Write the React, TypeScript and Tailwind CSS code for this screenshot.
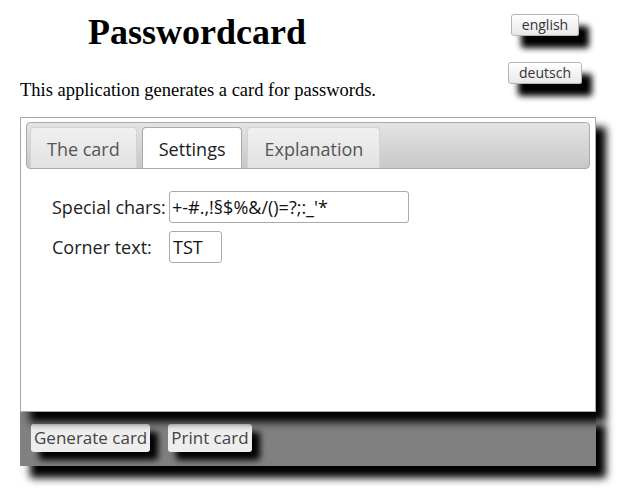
import React from "react";

const sans = "font-['Open_Sans',sans-serif]";

function LangButton({ label }: { label: string }) {
  return (
    <button
      className={`${sans} rounded-[3px] border border-[#b5b5b5] bg-gradient-to-b from-white to-[#e8e8e8] px-[10px] h-[22px] text-[14px] leading-[20px] text-[#333] shadow-[10px_12px_6px_#000]`}
    >
      {label}
    </button>
  );
}

function Tab({ label, active }: { label: string; active?: boolean }) {
  return (
    <div
      className={`${sans} h-[41px] rounded-t-[4px] border border-b-0 px-[16px] text-[18px] leading-[42px] ${
        active
          ? "border-[#aaa] bg-white text-[#212121]"
          : "border-[#d3d3d3] bg-gradient-to-b from-[#f0f0f0] to-[#e2e2e2] text-[#555]"
      }`}
    >
      {label}
    </div>
  );
}

function FooterButton({ label }: { label: string }) {
  return (
    <button
      className={`${sans} h-[28px] rounded-[3px] bg-[#eee] px-[3px] text-[17px] leading-[28px] text-[#444] shadow-[8px_8px_6px_#000]`}
    >
      {label}
    </button>
  );
}

export default function App() {
  return (
    <div className="h-[496px] w-[625px] overflow-hidden bg-white">
      <div className="flex h-[117px]">
        <div className="w-[470px] pl-[20px]">
          <h1 className="mt-[10px] pl-[68px] font-['Liberation_Serif',serif] text-[36px] font-bold leading-[44px] text-black">
            Passwordcard
          </h1>
          <p className="mt-[25px] font-['Liberation_Serif',serif] text-[18.5px] leading-[22px] text-black">
            This application generates a card for passwords.
          </p>
        </div>
        <div className="flex w-[150px] flex-col items-center gap-[26px] pt-[14px]">
          <LangButton label="english" />
          <LangButton label="deutsch" />
        </div>
      </div>

      <div className="relative z-10 ml-[20px] h-[295px] w-[576px] border border-[#aaa] bg-white px-[5px] pt-[4px] shadow-[10px_10px_8px_#000]">
        <div className="flex h-[47px] items-end gap-[5px] rounded-[4px] border border-[#aaa] bg-gradient-to-b from-[#e4e4e4] to-[#c8c8c8] px-[3px]">
          <Tab label="The card" />
          <Tab label="Settings" active />
          <Tab label="Explanation" />
        </div>
        <div className={`${sans} mt-[22px] flex flex-col gap-[8px] pl-[26px] text-[18px] text-[#222]`}>
          <div className="flex items-center">
            <span className="w-[117px]">Special chars:</span>
            <input
              readOnly
              value="+-#.,!§$%&/()=?;:_'*"
              className="h-[32px] w-[240px] rounded-[3px] border border-[#aaa] px-[2px] text-[18px] text-[#111] outline-none"
            />
          </div>
          <div className="flex items-center">
            <span className="w-[117px]">Corner text:</span>
            <input
              readOnly
              value="TST"
              className="h-[32px] w-[53px] rounded-[3px] border border-[#aaa] px-[3px] text-[18px] text-[#111] outline-none"
            />
          </div>
        </div>
      </div>

      <div className="ml-[20px] flex h-[54px] w-[576px] items-start gap-[18px] bg-[#808080] pl-[11px] pt-[12px] shadow-[10px_12px_8px_#000]">
        <FooterButton label="Generate card" />
        <FooterButton label="Print card" />
      </div>
    </div>
  );
}
